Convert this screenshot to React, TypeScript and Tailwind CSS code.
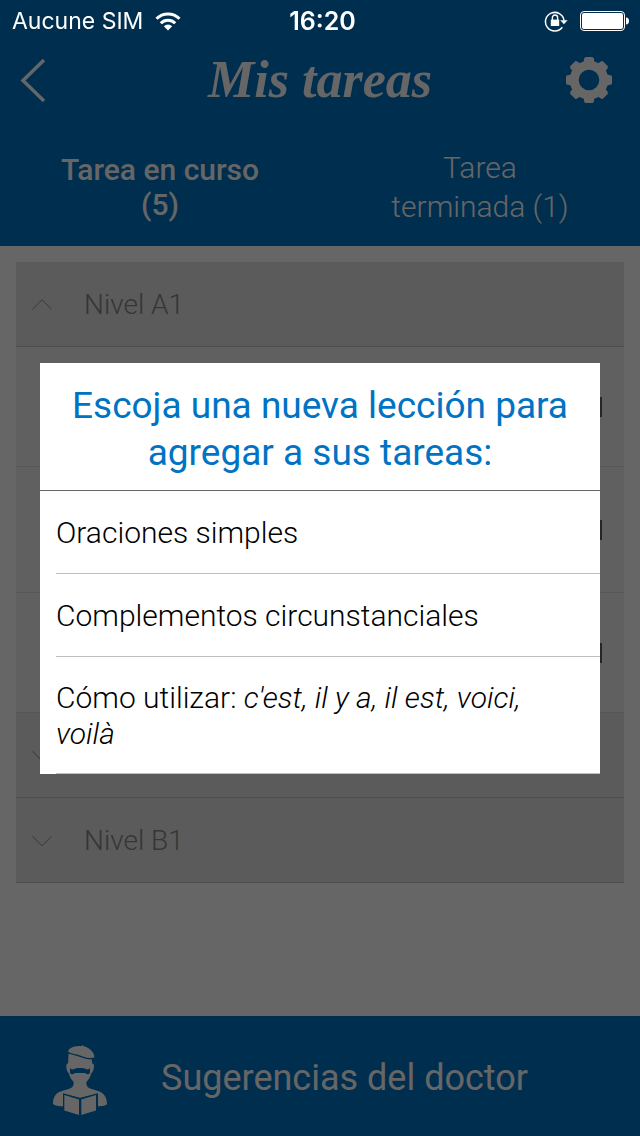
import React from "react";

const chevrons = {
  up: "M.5 10.500 10.500.5l10 10",
  down: "M.5 1l10 10 10-10",
};

function WifiIcon() {
  return (
    <svg viewBox="0 0 26 19" className="h-[19px] w-[26px]" aria-hidden="true" fill="none" stroke="currentColor" strokeWidth="3">
      <path d="M1.5 6.8a16.4 16.4 0 0 1 23 0" />
      <path d="M5.8 11.2a10.2 10.2 0 0 1 14.4 0" />
      <path d="M13 18.4 8.8 14.2a6 6 0 0 1 8.4 0z" fill="currentColor" stroke="none" />
    </svg>
  );
}

function RotationLockIcon() {
  return (
    <svg viewBox="0 0 24 22" className="h-[22px] w-6" aria-hidden="true" fill="none" stroke="currentColor">
      <path d="M18.3 17.2A9.3 9.3 0 1 1 20 10.5" strokeWidth="1.5" />
      <path d="M16.2 10.2h7.4l-3.7 4z" fill="currentColor" stroke="none" />
      <path d="M6.8 9.6h8.4v6.4H6.8z" fill="currentColor" stroke="none" />
      <path d="M8.4 10V7.6a2.6 2.6 0 0 1 5.2 0V10" strokeWidth="1.4" />
    </svg>
  );
}

function BatteryIcon() {
  return (
    <svg viewBox="0 0 49 20" className="h-5 w-[49px]" aria-hidden="true">
      <rect x=".5" y=".5" width="44" height="19" rx="3.5" fill="none" stroke="currentColor" />
      <rect x="2" y="2" width="41" height="16" rx="2" fill="currentColor" />
      <path d="M46 6.5c2 0 3 1.500 3 3.500s-1 3.500-3 3.500z" fill="currentColor" />
    </svg>
  );
}

function GearIcon() {
  const teeth = [0, 45, 90, 135, 180, 225, 270, 315];
  return (
    <svg viewBox="-23 -23 46 46" className="h-[46px] w-[46px]" aria-hidden="true">
      <circle r="14.800" fill="none" stroke="currentColor" strokeWidth="9" />
      {teeth.map((angle) => (
        <path key={angle} d="M-5.500-17.500-4.800-21.500Q-4.500-23-3-23H3Q4.500-23 4.800-21.500L5.500-17.500z" fill="currentColor" transform={`rotate(${angle})`} />
      ))}
    </svg>
  );
}

function DoctorIcon() {
  return (
    <svg viewBox="0 -4 54 74" className="h-[74px] w-[54px]" aria-hidden="true" fill="currentColor">
      <path d="M15.300 5.500C17 2 23 .8 29 1l.6-1 1.200 1.200C37 3 41.500 7.500 41.400 12.600c-3.400.8-7.400.6-10.800-.8-4.600-1.900-9-2.800-13.800-4.100-1-.3-1.800-1.200-1.500-2.200z" />
      <path d="M15.500 8.800c4.800 1 9.200 2.100 13.200 3.800 3.300 1.400 6.600 2 10.300 1.900v3.800c2 .2 2.200 2.300 1.800 4.800-.4 2.300-1.300 4.600-2.500 5.100-1 3.800-2.700 6.600-4.900 8.600-.4 3.800 1.300 6.100 5.200 7.300L45 46c5.600 1.400 9 6.400 9 13 0 1.200-4 2.300-9 2.300V48.800L27 53 10 48.800v12.500c-6 0-10-1.500-10-2.500 0-6.800 3.300-11.300 9-12.700l6.500-2c4-1.300 5.600-3.600 5.100-7.400-2.300-2-3.900-4.800-4.800-8.500-1.200-.5-2.100-2.800-2.400-5.200-.3-2.500 0-4.500 1.700-4.700z" />
      <path d="M17 23.200l2 1.300c3 0 4-2.500 8-1.200 4-1.300 5 1.200 8 1.200l2-1.300v4c0 1.500-1 2-3 2l-2-1.200H22l-2 1.200c-2 0-3-.5-3-2z" className="text-[#0073c4]" />
      <path d="M10 48.300 27 53l17.500-4.700V66L27 70 10 66z" className="text-[#0073c4]" />
      <path d="M11.300 50 26 54.500V70L11.300 65.500z" />
      <path d="M43 50 28.300 54.500V70L43 65.500z" />
    </svg>
  );
}

function LevelHeader({ open = false, label, children }: { open?: boolean; label?: string; children?: React.ReactNode }) {
  return (
    <button
      type="button"
      aria-expanded={open}
      aria-label={label}
      className="flex h-[85px] w-full items-center gap-8 border-b border-[#c4c4c4] bg-[#e3e3e3] px-4 pt-[2px] text-left text-[28px] leading-9 font-light text-[#888]"
    >
      <svg viewBox="0 0 21 12" className="h-3 w-5" aria-hidden="true" fill="none" stroke="currentColor">
        <path d={open ? chevrons.up : chevrons.down} />
      </svg>
      {children}
    </button>
  );
}

function TaskRow({ height }: { height: string }) {
  return (
    <li className={`flex items-center justify-end border-b border-[#dadada] bg-[#f1f1f1] px-[22px] ${height}`}>
      <span className="h-5 w-4 bg-[#606060]" />
    </li>
  );
}

function Lesson({ children }: { children: React.ReactNode }) {
  return (
    <li className="pl-4">
      <button
        type="button"
        className="block min-h-[83px] w-full border-b border-[#bfbfbf] pt-[23px] pr-10 pb-[21px] text-left text-[30px] leading-9 font-light text-black"
      >
        {children}
      </button>
    </li>
  );
}

export default function App() {
  return (
    <div className="relative flex min-h-screen flex-col bg-white font-['Roboto',sans-serif]">
      <header className="bg-[#0073c4] text-white">
        <div className="relative z-20 grid h-10 grid-cols-[1fr_auto_1fr] items-center pt-[2px] pr-[11px] pl-3 font-['Inter',sans-serif] text-[23px] leading-9">
          <div className="flex items-center gap-3 whitespace-nowrap">
            Aucune SIM
            <WifiIcon />
          </div>
          <span className="pl-1 text-[25px] font-semibold">16:20</span>
          <div className="flex items-center justify-end gap-3">
            <RotationLockIcon />
            <BatteryIcon />
          </div>
        </div>

        <div className="grid h-20 grid-cols-[1fr_auto_1fr] items-center px-5">
          <button type="button" aria-label="Volver" className="justify-self-start">
            <svg viewBox="0 0 26 44" className="h-11 w-[26px]" aria-hidden="true" fill="none" stroke="currentColor" strokeWidth="3.500">
              <path d="M24 2 3 22.500 24 43" />
            </svg>
          </button>
          <h1 className="font-['Liberation_Serif',serif] text-[52px] leading-[70px] font-bold italic">Mis tareas</h1>
          <button type="button" aria-label="Ajustes" className="justify-self-end pr-2">
            <GearIcon />
          </button>
        </div>

        <div role="tablist" className="grid h-[126px] grid-cols-2 text-[30px]">
          <button type="button" role="tab" aria-selected="true" className="px-12 pt-2 leading-[35px] font-medium">
            Tarea en curso (5)
          </button>
          <button type="button" role="tab" aria-selected="false" className="px-16 pt-2 leading-[39px] font-light">
            Tarea terminada (1)
          </button>
        </div>
      </header>

      <main className="flex-1 p-4">
        <LevelHeader open>Nivel A1</LevelHeader>
        <ul>
          <TaskRow height="h-[120px]" />
          <TaskRow height="h-[126px]" />
          <TaskRow height="h-[120px]" />
        </ul>
        <LevelHeader label="Nivel A2" />
        <LevelHeader>Nivel B1</LevelHeader>
      </main>

      <footer className="bg-[#0073c4] text-white">
        <button type="button" className="flex h-[120px] w-full items-center gap-[54px] px-[53px] pt-1 text-left text-[36px]">
          <DoctorIcon />
          Sugerencias del doctor
        </button>
      </footer>

      <div className="fixed inset-0 z-10 flex items-center bg-black/60 px-10">
        <section role="dialog" aria-modal="true" aria-labelledby="lesson-title" className="w-full bg-white">
          <h2
            id="lesson-title"
            className="border-b border-[#666] px-6 pt-[19px] pb-[14px] text-center text-[37px] leading-[47px] text-[#0073c4]"
          >
            Escoja una nueva lección para agregar a sus tareas:
          </h2>
          <ul>
            <Lesson>Oraciones simples</Lesson>
            <Lesson>Complementos circunstanciales</Lesson>
            <Lesson>
              Cómo utilizar: <em>c'est, il y a, il est, voici, voilà</em>
            </Lesson>
          </ul>
        </section>
      </div>
    </div>
  );
}
